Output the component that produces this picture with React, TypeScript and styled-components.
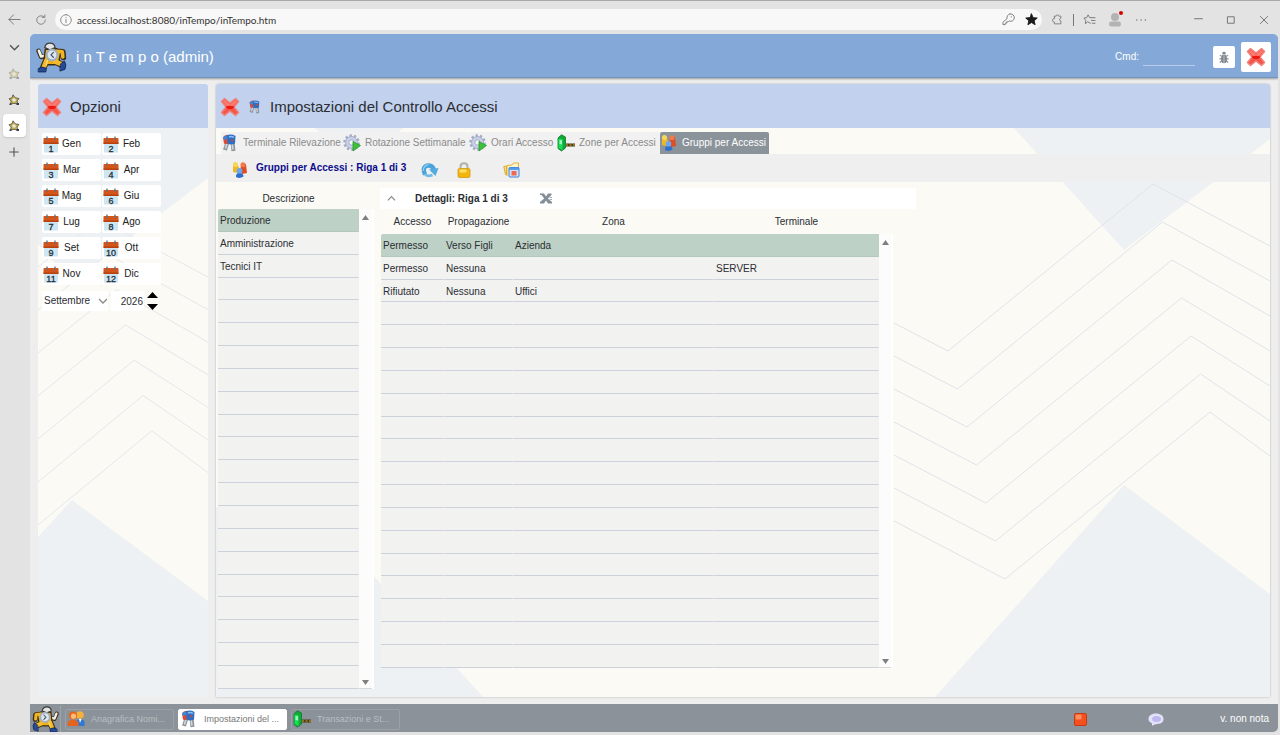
import React, { useState } from "react";
import styled, { createGlobalStyle, css } from "styled-components";

const GlobalStyle = createGlobalStyle`
  *, *::before, *::after { box-sizing: border-box; }
  body {
    margin: 0;
    background: #e3e3e3;
    color: #2b2e33;
    font-family: "Liberation Sans", Arial, sans-serif;
    font-size: 10px;
    line-height: 12px;
  }
  button, input, select { font: inherit; color: inherit; margin: 0; padding: 0; border: 0; background: none; border-radius: 0; }
  svg { display: block; flex: none; }
`;

/* ---------- layout ---------- */

const Browser = styled.div`
  display: flex;
  flex-direction: column;
  min-height: 100vh;
  background: #e3e3e3;
  border-top: 1px solid #a9a9ab;
  padding-bottom: 3px;
`;

const BrowserBar = styled.header`
  display: flex;
  align-items: center;
  height: 33px;
  padding: 4px 3px 0 6px;
  color: #77777a;
`;

const BarButton = styled.button<{ $w?: number; $dark?: boolean }>`
  display: flex;
  align-items: center;
  justify-content: center;
  flex: none;
  width: ${(p) => p.$w ?? 26}px;
  height: 21px;
  color: ${(p) => (p.$dark ? "#1c1c1c" : "inherit")};
`;

const AddressBox = styled.div`
  display: flex;
  align-items: center;
  flex: 1;
  height: 21px;
  gap: 5px;
  margin: 0 1px 0 -3px;
  padding: 0 3px 0 5px;
  border-radius: 11px;
  background: #f8f8f8;
`;

const Address = styled.input`
  flex: 1;
  min-width: 0;
  font-family: Lato, "Noto Sans", sans-serif;
  font-size: 10px;
  line-height: 14px;
  color: #333;
`;

const BarRule = styled.span`
  width: 1px;
  height: 12px;
  margin: 0 2px;
  background: #77777a;
`;

const Avatar = styled.span`
  position: relative;
  display: block;
`;

const AvatarDot = styled.span`
  position: absolute;
  top: -1px;
  right: -1px;
  width: 4px;
  height: 4px;
  border-radius: 50%;
  background: #d40000;
`;

const WindowButtons = styled.div`
  display: flex;
  margin-left: 31px;
  gap: 7px;
`;

const Below = styled.div`
  display: flex;
  flex: 1;
`;

const Rail = styled.nav`
  display: flex;
  flex-direction: column;
  align-items: center;
  width: 30px;
  padding: 2px 2px 0 0;
  gap: 3px;
  color: #555;
`;

const RailTab = styled.button<{ $active?: boolean; $faded?: boolean }>`
  display: flex;
  align-items: center;
  justify-content: center;
  width: 23px;
  height: 23px;
  border-radius: 4px;
  background: ${(p) => (p.$active ? "#fff" : "transparent")};
  box-shadow: ${(p) => (p.$active ? "0 1px 2px #c4c4c4" : "none")};
  svg { opacity: ${(p) => (p.$faded ? 0.4 : 1)}; }
`;

const AppWindow = styled.div`
  display: flex;
  flex-direction: column;
  flex: 1;
  min-width: 0;
  margin-right: 2px;
  border-radius: 5px 5px 5px 0;
  background: #eee;
  overflow: hidden;
`;

const AppBar = styled.header`
  display: flex;
  align-items: center;
  height: 44px;
  padding: 3px 7px 0 6px;
  background: #84a9d8;
  border-bottom: 1px solid #7594bd;
  box-shadow: 0 1px 2px #9a9a9a;
  color: #fff;
`;

const AppTitle = styled.h1`
  flex: 1;
  margin: 0 0 0 9px;
  font-size: 15px;
  line-height: 20px;
  font-weight: 400;
`;

const CommandLabel = styled.label`
  display: flex;
  align-items: center;
  gap: 4px;
  margin-right: 12px;
`;

const CommandInput = styled.input`
  width: 52px;
  height: 17px;
  border-bottom: 1px solid #b5cbe8;
`;

const AppBarButton = styled.button<{ $size: number }>`
  display: flex;
  align-items: center;
  justify-content: center;
  width: ${(p) => p.$size}px;
  height: ${(p) => p.$size}px;
  margin-left: 6px;
  border-radius: 2px;
  background: #fff;
`;

const Workspace = styled.main`
  display: flex;
  flex: 1;
  gap: 8px;
  padding: 6px 8px 7px;
`;

const Panel = styled.section<{ $width?: number; $raised?: boolean }>`
  display: flex;
  flex-direction: column;
  ${(p) => (p.$width ? css`flex: none; width: ${p.$width}px;` : css`flex: 1; min-width: 0;`)}
  border-radius: 3px 3px 0 0;
  box-shadow: ${(p) => (p.$raised ? "0 0 2px #a8a8a8" : "none")};
`;

const PanelHead = styled.header`
  display: flex;
  align-items: center;
  height: 44px;
  padding: 2px 4px 0;
  gap: 8px;
  background: #c1d1ee;
  border-radius: 3px 3px 0 0;
`;

const PanelTitle = styled.h2`
  margin: 0;
  font-size: 15px;
  line-height: 20px;
  font-weight: 400;
`;

const IconButton = styled.button`
  display: flex;
`;

const PanelBody = styled.div`
  position: relative;
  flex: 1;
  background: #fbfaf5;
`;

const Backdrop = styled.svg`
  position: absolute;
  inset: 0;
  width: 100%;
  height: 100%;
`;

const Content = styled.div`
  position: relative;
`;

/* ---------- options ---------- */

const Options = styled(Content)`
  padding: 5px 4px;
`;

const MonthGrid = styled.div`
  display: grid;
  grid-template-columns: 59px 59px;
  gap: 4px 1px;
`;

const MonthButton = styled.button`
  display: flex;
  align-items: center;
  height: 22px;
  padding-left: 1px;
  border-radius: 2px;
  background: #fff;
  color: #222;
`;

const MonthName = styled.span`
  flex: 1;
  padding-right: 17px;
  text-align: center;
`;

const PeriodRow = styled.div`
  display: flex;
  align-items: center;
  gap: 3px;
  margin-top: 6px;
`;

const MonthSelect = styled.span`
  display: flex;
  align-items: center;
  width: 66px;
  height: 20px;
  background: #fff;
`;

const Select = styled.select`
  appearance: none;
  flex: 1;
  width: 100%;
  height: 20px;
  padding-left: 2px;
  margin-right: -14px;
`;

const YearInput = styled.input`
  width: 33px;
  height: 20px;
  padding-right: 1px;
  text-align: right;
  background: #fff;
`;

const Spinner = styled.span`
  display: flex;
  flex-direction: column;
  gap: 6px;
`;

/* ---------- settings ---------- */

const Tabs = styled.div`
  display: flex;
  padding: 4px 0 0 5px;
`;

const Tab = styled.button<{ $width: number; $active?: boolean }>`
  display: flex;
  align-items: center;
  width: ${(p) => p.$width}px;
  height: 22px;
  gap: 4px;
  text-align: left;
  white-space: nowrap;
  border-radius: 2px 2px 0 0;
  background: ${(p) => (p.$active ? "#8b939a" : "#f1f1f1")};
  color: ${(p) => (p.$active ? "#fff" : "#8b8b8b")};
`;

const Toolbar = styled.div`
  display: flex;
  align-items: center;
  height: 28px;
  padding: 4px 0 0 15px;
  background: #efefef;
`;

const ToolbarTitle = styled.h3`
  width: 172px;
  margin: 0;
  padding: 0 0 5px 7px;
  font-size: 10px;
  line-height: 12px;
  color: #0c0c8c;
  white-space: nowrap;
`;

const ToolButton = styled.button<{ $gap?: number }>`
  display: flex;
  margin-right: ${(p) => p.$gap ?? 0}px;
`;

const Lists = styled.div`
  display: flex;
  align-items: flex-start;
  padding: 6px 2px 8px;
`;

const Grid = styled.div<{ $head: number }>`
  display: flex;
  width: max-content;
  padding-right: 2px;
  background: linear-gradient(#fff, #fff) right bottom / 16px calc(100% - ${(p) => p.$head}px) no-repeat;
`;

const Table = styled.table<{ $width: number; $height: number; $head: number }>`
  width: ${(p) => p.$width}px;
  height: ${(p) => p.$height}px;
  table-layout: fixed;
  border-collapse: separate;
  border-spacing: 0;
  th { height: ${(p) => p.$head}px; padding: 0; font-weight: 400; text-align: center; }
`;

const Row = styled.tr<{ $selected?: boolean }>`
  td {
    padding: 2px 0 0 2px;
    line-height: 12px;
    background: ${(p) => (p.$selected ? "#bed1c6" : "#f2f2f1")};
    border-right: 1px solid ${(p) => (p.$selected ? "#bed1c6" : "#f2f2f1")};
    border-bottom: 1px solid ${(p) => (p.$selected ? "#b3c8bb" : "#cdd1dc")};
  }
  td:first-child { border-top-left-radius: 2px; }
`;

const ScrollTrack = styled.div<{ $top: number; $width: number }>`
  display: flex;
  flex-direction: column;
  align-items: center;
  justify-content: space-between;
  width: ${(p) => p.$width}px;
  margin-top: ${(p) => p.$top}px;
  padding: 6px 0 3px;
  background: #fcfcfc;
  border-bottom: 1px solid #d8d8d8;
`;

const Details = styled.div`
  margin-left: 6px;
`;

const DetailsBar = styled.div`
  display: flex;
  align-items: center;
  width: 536px;
  height: 21px;
  padding-left: 7px;
  background: #fff;
`;

const DetailsTitle = styled.h3`
  width: 125px;
  margin: 0 0 0 19px;
  font-size: 10px;
  line-height: 12px;
`;

const DetailsTable = styled.div`
  padding-left: 1px;
`;

/* ---------- task bar ---------- */

const TaskBar = styled.footer`
  display: flex;
  align-items: center;
  height: 28px;
  padding: 2px 9px 0 2px;
  background: #8b9299;
  color: #fff;
`;

const TaskRule = styled.span`
  width: 1px;
  height: 26px;
  margin: 0 4px 0 1px;
  background: #9ea4aa;
`;

const TaskButton = styled.button<{ $active?: boolean }>`
  display: flex;
  align-items: center;
  width: 109px;
  height: 21px;
  gap: 6px;
  margin-right: 4px;
  padding-left: 1px;
  border: 1px solid ${(p) => (p.$active ? "#fff" : "#9ba1a7")};
  border-radius: 2px;
  background: ${(p) => (p.$active ? "#fff" : "transparent")};
  color: ${(p) => (p.$active ? "#777" : "#b9bec2")};
  font-size: 9px;
  white-space: nowrap;
`;

const Tray = styled.div`
  display: flex;
  align-items: center;
  margin-left: auto;
`;

const TrayButton = styled.button<{ $gap: number }>`
  display: flex;
  margin-right: ${(p) => p.$gap}px;
`;

/* ---------- icons ---------- */

const Mascot = ({ size, flip }: { size: number; flip?: boolean }) => (
  <svg width={size} height={size} viewBox="0 0 30 30" aria-hidden="true">
    <g transform={flip ? "translate(30 0) scale(-1 1)" : undefined} strokeLinejoin="round" strokeLinecap="round">
      <path d="M10 13 L5 14.500 L2.500 8.500" stroke="#3a2f16" strokeWidth="4.400" fill="none" />
      <path d="M10 13 L5 14 L2.800 8.500" stroke="#f1f1ee" strokeWidth="2.600" fill="none" />
      <path d="M10 18 L7 25 M19 19 L25 22" stroke="#3a2f16" strokeWidth="6.400" fill="none" />
      <path d="M20 9 L26 9.500 L26.500 15" stroke="#3a2f16" strokeWidth="5.400" fill="none" />
      <path d="M9 7 L20 6.500 L24 10 L22.500 17 L23 21 L17 22 L10 22 L8 16 Z" fill="#efae1f" stroke="#3a2f16" strokeWidth="1.400" />
      <path d="M20 9 L25.500 9.500 L26 14.500" stroke="#f2b526" strokeWidth="3.400" fill="none" />
      <path d="M10 18 L7.500 24.500 M18.500 19 L24.500 21.500" stroke="#f4bb2c" strokeWidth="4.400" fill="none" />
      <path d="M11 18 L10 22" stroke="#fbdc6a" strokeWidth="1.400" />
      <path d="M8.500 5.500 Q9 1 13.500 1 Q18 1 18.500 5.500 L13.500 7.500 Z" fill="#e3e5e5" stroke="#3a3a36" strokeWidth="1.200" />
      <path d="M2.500 25.500 Q6 23 10 25.500 L9.500 29 L2.500 29 Z" fill="#244a9b" stroke="#15254d" strokeWidth="0.800" />
      <path d="M24 21 L27.500 18.500 Q30 22 28 26.500 L23.500 28 Z" fill="#244a9b" stroke="#15254d" strokeWidth="0.800" />
      <circle cx="15.500" cy="12.500" r="5.200" fill="#dde7f1" stroke="#a3afbb" strokeWidth="2" />
      <path d="M16.800 10 L14.500 12.500 L16.800 14.800" fill="none" stroke="#4b5865" strokeWidth="1.200" />
    </g>
  </svg>
);

const StarMascot = () => (
  <svg width="12" height="12" viewBox="0 0 12 12" aria-hidden="true">
    <path d="M5 0.800 L7.200 3.800 L11 4.500 L9 7 L9.800 10 L6 9.300 L2.500 10 L3.200 7 L1 4.800 L4 3.800 Z" fill="#c9b04a" stroke="#4b4a40" strokeWidth="0.800" />
    <circle cx="6" cy="6" r="1.800" fill="#e6e8e6" />
    <path d="M1.500 9.500 H3.500 V11 H1.500 Z M8.500 9 H11 V11 H8.500 Z" fill="#2f3a55" />
  </svg>
);

const RedCross = ({ size = 20 }: { size?: number }) => (
  <svg width={size} height={size} viewBox="0 0 20 20" aria-hidden="true">
    <path
      d="M4.500 1.500 L10 6 L15.500 1.500 L18.500 4.500 L14 10 L18.500 15.500 L15.500 18.500 L10 14 L4.500 18.500 L1.500 15.500 L6 10 L1.500 4.500 Z"
      fill="#f5564b" stroke="#f0827a" strokeWidth="1.500" strokeLinejoin="round"
    />
    <path d="M4.500 3 L10 7.500 L15.500 3 L17 4.500 L13 9 L7 9 L3 4.500 Z" fill="#ff8b80" opacity="0.7" />
    <path d="M5.500 9.500 Q10 8 14.500 9.500 L13 11.500 Q10 12.500 7 11.500 Z" fill="#ea1a12" />
  </svg>
);

const Keys = ({ size = 18 }: { size?: number }) => (
  <svg width={size} height={size} viewBox="0 0 18 18" aria-hidden="true">
    <path d="M6.500 8 L4 16 M11.500 8 L12.500 17" stroke="#8d949b" strokeWidth="4" />
    <path d="M6 9 L4.500 14.500 M11 9 L12 15.500" stroke="#d3d8dc" strokeWidth="1.600" />
    <path d="M2 3.500 Q4 0 8 1 L9 8.500 Q6 11 3 9.500 Z" fill="#dd4a30" />
    <path d="M6 1.500 Q10 -0.500 14.500 2 L14 9.500 Q10 11.500 6.500 9.500 Z" fill="#2c6fc4" />
    <path d="M8 3 Q10.500 1.800 13 3.500" stroke="#8ec0f2" strokeWidth="1.400" fill="none" />
    <path d="M10 5 Q12 4.500 12.500 6.500 L11 8 Z" fill="#d2452f" />
    <path d="M2 3 L5.500 1.200 L7 4.500 L3 6 Z" fill="#3f86d8" />
  </svg>
);

const GearPlay = () => (
  <svg width="18" height="18" viewBox="0 0 18 18" aria-hidden="true">
    <circle cx="8.500" cy="8.500" r="7" fill="none" stroke="#a3adc9" strokeWidth="2.600" strokeDasharray="2.400 1.998" />
    <circle cx="8.500" cy="8.500" r="6" fill="#c9d0e6" stroke="#98a3c2" strokeWidth="0.800" />
    <circle cx="8.500" cy="8.500" r="2.600" fill="#f6f7fb" stroke="#98a3c2" strokeWidth="0.800" />
    <path d="M10 7.500 L17.500 11.500 L10 17 Z" fill="#3ec23a" stroke="#27972a" strokeWidth="0.800" />
  </svg>
);

const Door = () => (
  <svg width="18" height="18" viewBox="0 0 18 18" aria-hidden="true">
    <path d="M1 4 L4.500 0.800 L8.500 3 L8.500 14 L4.500 17 L1 14.500 Z" fill="#12a839" stroke="#0a7a28" strokeWidth="0.800" />
    <path d="M1.500 4.500 L5.500 5 L5.500 16 L1.500 14 Z" fill="#18dd55" />
    <path d="M2.500 6 L5 6.300 L5 10.500 L2.500 10 Z" fill="#9df5bf" />
    <path d="M9 11 H18" stroke="#4a3a14" strokeWidth="3" />
    <path d="M9 11 H18" stroke="#d9a833" strokeWidth="1.200" strokeDasharray="2 1.500" />
  </svg>
);

const People = () => (
  <svg width="18" height="18" viewBox="0 0 18 18" aria-hidden="true">
    <path d="M2 11 V5 Q1.500 2 4 1.500 Q6.500 2 7 4.500 L8.500 8 L6.500 12 Z" fill="#efb727" />
    <circle cx="4.500" cy="3.600" r="2.500" fill="#f9d659" />
    <path d="M9.500 8 L10 3.500 Q13 0.500 15 3.500 L16 12 L11 13 Z" fill="#df4d27" />
    <circle cx="12" cy="3.800" r="2.500" fill="#f47a4c" />
    <path d="M5 16 Q4.500 12.500 8 11.500 Q12.500 12 12.500 15.500 Q9 18 5 16 Z" fill="#2e6fce" />
    <circle cx="8.500" cy="9.800" r="2.800" fill="#6aa7f0" />
  </svg>
);

const Couple = () => (
  <svg width="18" height="18" viewBox="0 0 18 18" aria-hidden="true">
    <circle cx="13" cy="5" r="3.800" fill="#f5b13a" />
    <path d="M9 16 V11 Q13 7 17.500 11 V16 Z" fill="#2f79d6" />
    <path d="M12 9 L13 13 L14.500 9 Z" fill="#fff" />
    <circle cx="6" cy="5.500" r="4" fill="#e8641b" />
    <circle cx="6.500" cy="6.200" r="2.600" fill="#f9bd7a" />
    <path d="M0.500 16 V12 Q6 7.500 11.500 12 V16 Z" fill="#e2641e" />
  </svg>
);

const Refresh = () => (
  <svg width="18" height="16" viewBox="0 0 18 16" aria-hidden="true">
    <path d="M4 12.500 Q0.500 4.500 7 3.500 Q11.500 3 13 8" fill="none" stroke="#4aa3da" strokeWidth="4.400" />
    <path d="M2 9 Q2.500 3.500 7.500 2.500" fill="none" stroke="#9bd4f3" strokeWidth="1.200" />
    <path d="M8 7.500 L17.500 6 L14.500 14 Z" fill="#52acdf" />
    <path d="M4 12.500 Q7 15 11.500 13" fill="none" stroke="#74bbe6" strokeWidth="2.600" />
  </svg>
);

const Padlock = () => (
  <svg width="14" height="16" viewBox="0 0 14 16" aria-hidden="true">
    <path d="M3.500 7.500 V4.500 Q3.500 1.200 7 1.200 Q10.500 1.200 10.500 4.500 V7.500" fill="none" stroke="#b3b1a6" strokeWidth="2" />
    <rect x="1" y="6.500" width="12" height="9" rx="1.500" fill="#f3b60f" stroke="#d19a10" strokeWidth="0.800" />
    <rect x="2.500" y="7.500" width="7" height="3" rx="1" fill="#ffe06a" />
  </svg>
);

const Folders = () => (
  <svg width="17" height="16" viewBox="0 0 17 16" aria-hidden="true">
    <path d="M0.800 4.500 L3.500 4 V13 L2.500 12.500 Z" fill="#fbe08a" stroke="#dca928" />
    <path d="M4 14 V3.500 L9 3 L10.500 1 H15.500 V8" fill="#fdf3cc" stroke="#e2b23c" />
    <rect x="6" y="5.500" width="10" height="9.500" rx="1" fill="#cfe3fb" stroke="#3a82d8" />
    <rect x="6" y="5.500" width="10" height="2.400" fill="#4f97ea" />
    <rect x="8.500" y="9" width="5" height="4.500" fill="#f0694d" />
  </svg>
);

const ExcelMark = () => (
  <svg width="12" height="11" viewBox="0 0 12 11" aria-hidden="true">
    <path d="M0 0.500 H4 L6 3.500 L8 0.500 H11.500 V2 L7.800 5.500 L12 9 V10.500 H8 L6 7.500 L4 10.500 H0 V9 L4.200 5.500 L1.500 2 H0 Z" fill="#848e98" />
    <path d="M9.500 4.500 H12 M9.500 6.500 H12" stroke="#a6aeb6" />
  </svg>
);

const Bug = () => (
  <svg width="10" height="13" viewBox="0 0 12 13" preserveAspectRatio="none" aria-hidden="true">
    <path d="M3.800 3.200 Q3.800 0.800 6 0.800 Q8.200 0.800 8.200 3.200 Z" fill="#7d858c" />
    <path d="M1 4.500 L3 5 M11 4.500 L9 5 M0.500 7.800 H3 M11.500 7.800 H9 M1 11.500 L3 10 M11 11.500 L9 10" stroke="#7d858c" strokeWidth="1.200" />
    <rect x="2.600" y="3.800" width="6.800" height="8.400" rx="3" fill="#7d858c" />
    <path d="M6 4.500 V12" stroke="#d9dcdf" strokeWidth="0.800" />
  </svg>
);

const Calendar = ({ day }: { day: number }) => (
  <svg width="16" height="17" viewBox="0 0 16 17" aria-hidden="true">
    <rect x="1" y="3" width="14" height="13.500" fill="#cde6f2" />
    <rect x="0.500" y="2" width="15" height="6" rx="0.800" fill="#d2561b" />
    <rect x="0.500" y="6.500" width="15" height="1.500" fill="#b5430f" />
    <path d="M4 0.500 V4 M12 0.500 V4" stroke="#6b7076" strokeWidth="1.400" />
    <text x="8" y="16" textAnchor="middle" fontFamily="Liberation Sans" fontSize="9" fill="#22303c" stroke="#22303c" strokeWidth="0.300">{day}</text>
  </svg>
);

const Triangle = ({ down, big }: { down?: boolean; big?: boolean }) => (
  <svg width={big ? 11 : 7} height={big ? 6 : 5} viewBox="0 0 10 6" preserveAspectRatio="none" aria-hidden="true">
    <path d={down ? "M0 0 H10 L5 6 Z" : "M0 6 H10 L5 0 Z"} fill={big ? "#000" : "#7f7f7f"} />
  </svg>
);

const Chevron = ({ up, size = 9, color = "currentColor" }: { up?: boolean; size?: number; color?: string }) => (
  <svg width={size} height={size} viewBox="0 0 10 10" aria-hidden="true">
    <path d={up ? "M1 7 L5 3 L9 7" : "M1 3 L5 7 L9 3"} fill="none" stroke={color} strokeWidth="1.300" />
  </svg>
);

const Line = ({ d, size = 13, fill = "none", width = 1 }: { d: string; size?: number; fill?: string; width?: number }) => (
  <svg width={size} height={size} viewBox="0 0 14 14" aria-hidden="true">
    <path d={d} fill={fill} stroke="currentColor" strokeWidth={width} strokeLinejoin="round" strokeLinecap="round" />
  </svg>
);

const STAR = "M7 1 L8.800 5 L13.200 5.400 L9.900 8.300 L10.900 12.600 L7 10.300 L3.100 12.600 L4.100 8.300 L0.800 5.400 L5.200 5 Z";

/* ---------- data ---------- */

const months = ["Gen", "Feb", "Mar", "Apr", "Mag", "Giu", "Lug", "Ago", "Set", "Ott", "Nov", "Dic"];
const monthNames = [
  "Gennaio", "Febbraio", "Marzo", "Aprile", "Maggio", "Giugno",
  "Luglio", "Agosto", "Settembre", "Ottobre", "Novembre", "Dicembre",
];

const tabs = [
  { label: "Terminale Rilevazione", width: 122, icon: <Keys /> },
  { label: "Rotazione Settimanale", width: 126, icon: <GearPlay /> },
  { label: "Orari Accesso", width: 88, icon: <GearPlay /> },
  { label: "Zone per Accessi", width: 103, icon: <Door /> },
  { label: "Gruppi per Accessi", width: 109, icon: <People />, active: true },
];

const tasks = [
  { label: "Anagrafica Nomi...", icon: <Couple /> },
  { label: "Impostazioni del ...", icon: <Keys />, active: true },
  { label: "Transazioni e St...", icon: <Door /> },
];

const groups = ["Produzione", "Amministrazione", "Tecnici IT"];
const rules = [
  ["Permesso", "Verso Figli", "Azienda", ""],
  ["Permesso", "Nessuna", "", "SERVER"],
  ["Rifiutato", "Nessuna", "Uffici", ""],
];

const BLANK = "\u00a0";

const fillRows = <T,>(rows: T[], count: number, empty: T) =>
  Array.from({ length: count }, (_, i) => rows[i] ?? empty);

const mainWaves = Array.from({ length: 7 }, (_, i) => {
  const x = i * 9.5;
  const y = i * 38;
  return `M678 ${195 + i * 33} L${732 + x} ${223 + y} L${937 + x} ${56 + y} L1054 ${118 + i * 35}`;
});

const sideWaves = Array.from({ length: 7 }, (_, i) =>
  `M0 ${139 + i * 43} L${61 + i * 8.8} ${91 + i * 35.3} L170 ${149 + i * 32.6}`,
);

const Scroll = ({ top, width }: { top: number; width: number }) => (
  <ScrollTrack $top={top} $width={width}>
    <IconButton aria-label="Scorri su"><Triangle /></IconButton>
    <IconButton aria-label="Scorri giù"><Triangle down /></IconButton>
  </ScrollTrack>
);

const OptionsPanel = () => {
  const [month, setMonth] = useState("Settembre");
  const [year, setYear] = useState(2026);
  return (
    <Panel $width={170}>
      <PanelHead>
        <IconButton aria-label="Chiudi opzioni"><RedCross /></IconButton>
        <PanelTitle>Opzioni</PanelTitle>
      </PanelHead>
      <PanelBody>
        <Backdrop viewBox="0 0 170 569" preserveAspectRatio="xMinYMin slice" aria-hidden="true">
          <path d="M0 0 H170 V50 L34 154 L0 116 Z M34 372 L170 473 V569 H0 V409 Z" fill="#edf1f4" />
          {sideWaves.map((d) => <path key={d} d={d} fill="none" stroke="#e4e7ec" />)}
        </Backdrop>
        <Options>
          <MonthGrid>
            {months.map((name, i) => (
              <MonthButton key={name}>
                <Calendar day={i + 1} />
                <MonthName>{name}</MonthName>
              </MonthButton>
            ))}
          </MonthGrid>
          <PeriodRow>
            <MonthSelect>
              <Select aria-label="Mese" value={month} onChange={(e) => setMonth(e.target.value)}>
                {monthNames.map((name) => <option key={name}>{name}</option>)}
              </Select>
              <Chevron size={10} color="#8a8a8a" />
            </MonthSelect>
            <YearInput aria-label="Anno" value={year} onChange={(e) => setYear(Number(e.target.value) || 0)} />
            <Spinner>
              <IconButton aria-label="Anno successivo" onClick={() => setYear(year + 1)}><Triangle big /></IconButton>
              <IconButton aria-label="Anno precedente" onClick={() => setYear(year - 1)}><Triangle big down /></IconButton>
            </Spinner>
          </PeriodRow>
        </Options>
      </PanelBody>
    </Panel>
  );
};

const SettingsPanel = () => (
  <Panel $raised>
    <PanelHead>
      <IconButton aria-label="Chiudi impostazioni"><RedCross /></IconButton>
      <Keys size={14} />
      <PanelTitle>Impostazioni del Controllo Accessi</PanelTitle>
    </PanelHead>
    <PanelBody>
      <Backdrop viewBox="0 0 1054 569" preserveAspectRatio="xMaxYMin slice" aria-hidden="true">
        <path
          d="M99 0 H187 L143 40 Z M798 0 L908 122 L1054 11 V0 Z M908 357 L1054 466 V569 H719 Z M60 340 L267 569 H0 V380 Z"
          fill="#edf1f4"
        />
        {mainWaves.map((d) => <path key={d} d={d} fill="none" stroke="#dfe3ea" />)}
      </Backdrop>
      <Content>
        <Tabs role="tablist">
          {tabs.map((tab) => (
            <Tab key={tab.label} role="tab" aria-selected={!!tab.active} $width={tab.width} $active={tab.active}>
              {tab.icon}
              {tab.label}
            </Tab>
          ))}
        </Tabs>
        <Toolbar>
          <People />
          <ToolbarTitle>Gruppi per Accessi : Riga 1 di 3</ToolbarTitle>
          <ToolButton $gap={18} aria-label="Aggiorna"><Refresh /></ToolButton>
          <ToolButton $gap={32} aria-label="Blocca"><Padlock /></ToolButton>
          <ToolButton aria-label="Cartelle"><Folders /></ToolButton>
        </Toolbar>
        <Lists>
          <Grid $head={21}>
            <Table $width={141} $height={501} $head={21}>
              <thead><tr><th scope="col">Descrizione</th></tr></thead>
              <tbody>
                {fillRows(groups, 21, BLANK).map((name, i) => (
                  <Row key={i} $selected={i === 0}><td>{name}</td></Row>
                ))}
              </tbody>
            </Table>
            <Scroll top={21} width={13} />
          </Grid>
          <Details>
            <DetailsBar>
              <IconButton aria-label="Comprimi"><Chevron up color="#888" /></IconButton>
              <DetailsTitle>Dettagli: Riga 1 di 3</DetailsTitle>
              <IconButton aria-label="Esporta in Excel"><ExcelMark /></IconButton>
            </DetailsBar>
            <DetailsTable>
              <Grid $head={25}>
                <Table $width={498} $height={459} $head={25}>
                  <colgroup>
                    <col width="63" />
                    <col width="69" />
                    <col width="201" />
                    <col width="165" />
                  </colgroup>
                  <thead>
                    <tr>
                      {["Accesso", "Propagazione", "Zona", "Terminale"].map((name) => <th key={name} scope="col">{name}</th>)}
                    </tr>
                  </thead>
                  <tbody>
                    {fillRows(rules, 19, ["", "", "", ""]).map((cells, i) => (
                      <Row key={i} $selected={i === 0}>
                        {cells.map((cell, c) => <td key={c}>{cell || BLANK}</td>)}
                      </Row>
                    ))}
                  </tbody>
                </Table>
                <Scroll top={25} width={12} />
              </Grid>
            </DetailsTable>
          </Details>
        </Lists>
      </Content>
    </PanelBody>
  </Panel>
);

export default function App() {
  return (
    <Browser>
      <GlobalStyle />
      <BrowserBar>
        <BarButton $w={17} aria-label="Indietro"><Line d="M13 7 H1 M6 2 L1 7 L6 12" /></BarButton>
        <BarButton $w={35} aria-label="Ricarica"><Line d="M12 7 A5 5 0 1 1 10 3 M11.500 1 V4 H8.500" size={12} /></BarButton>
        <AddressBox>
          <Line d="M7 0.800 A6.200 6.200 0 1 1 6.900 0.800 M7 6.300 V10 M7 4 V4.200" size={12} />
          <Address aria-label="Indirizzo" defaultValue="accessi.localhost:8080/inTempo/inTempo.htm" />
          <BarButton $w={20} aria-label="Password">
            <Line d="M8.500 1 A4 4 0 1 1 7.500 8.500 L6.500 9.500 H5 V11 H3.500 V12.500 H1 V10 L5.500 6 A4 4 0 0 1 8.500 1 M10 4 V4.200" />
          </BarButton>
          <BarButton $w={16} $dark aria-label="Preferiti"><Line d={STAR} fill="currentColor" /></BarButton>
        </AddressBox>
        <BarButton $w={28} aria-label="Estensioni">
          <Line d="M4 2.500 H6 A1.500 1.500 0 0 1 9 2.500 H11.500 V5 A1.500 1.500 0 1 0 11.500 8 V11.500 H4 V9.500 A2 2 0 0 1 4 5 Z" size={12} />
        </BarButton>
        <BarRule />
        <BarButton aria-label="Elenco preferiti">
          <Line d="M8 11 L5 9.500 L2.500 11.500 L3 8 L1 5.500 L4 5 L5.500 2 L7.200 5 H13 M9 8 H13 M10 11 H13" />
        </BarButton>
        <BarButton aria-label="Profilo">
          <Avatar>
            <svg width="14" height="15" viewBox="0 0 14 15" aria-hidden="true">
              <circle cx="7" cy="5" r="4" fill="#b3b3b3" />
              <rect x="1" y="9.500" width="12" height="5" rx="2.500" fill="#b3b3b3" />
            </svg>
            <AvatarDot />
          </Avatar>
        </BarButton>
        <BarButton aria-label="Altro"><Line d="M2 7 H2.200 M7 7 H7.200 M12 7 H12.200" width={1.5} size={12} /></BarButton>
        <WindowButtons>
          <BarButton aria-label="Riduci"><Line d="M2 6 H12" size={11} width={1.3} /></BarButton>
          <BarButton aria-label="Ingrandisci"><Line d="M2.500 2.500 H11.500 V11.500 H2.500 Z" size={10} width={1.4} /></BarButton>
          <BarButton aria-label="Chiudi finestra"><Line d="M2 2 L12 12 M12 2 L2 12" size={10} width={1.4} /></BarButton>
        </WindowButtons>
      </BrowserBar>
      <Below>
        <Rail>
          <RailTab aria-label="Schede"><Chevron size={11} /></RailTab>
          <RailTab $faded aria-label="Scheda 1"><StarMascot /></RailTab>
          <RailTab aria-label="Scheda 2"><StarMascot /></RailTab>
          <RailTab $active aria-label="Scheda 3"><StarMascot /></RailTab>
          <RailTab aria-label="Nuova scheda"><Line d="M7 2 V12 M2 7 H12" size={12} width={1.3} /></RailTab>
        </Rail>
        <AppWindow>
          <AppBar>
            <Mascot size={31} />
            <AppTitle>i n T e m p o (admin)</AppTitle>
            <CommandLabel>
              Cmd:
              <CommandInput type="text" />
            </CommandLabel>
            <AppBarButton $size={22} aria-label="Debug"><Bug /></AppBarButton>
            <AppBarButton $size={30} aria-label="Esci"><RedCross /></AppBarButton>
          </AppBar>
          <Workspace>
            <OptionsPanel />
            <SettingsPanel />
          </Workspace>
          <TaskBar>
            <IconButton aria-label="Menu"><Mascot size={27} flip /></IconButton>
            <TaskRule />
            {tasks.map((task) => (
              <TaskButton key={task.label} $active={task.active}>
                {task.icon}
                {task.label}
              </TaskButton>
            ))}
            <Tray>
              <TrayButton $gap={61} aria-label="Stato">
                <svg width="13" height="13" viewBox="0 0 13 13" aria-hidden="true">
                  <rect x="0.500" y="0.500" width="12" height="12" rx="1.500" fill="#f4511f" stroke="#c93a10" />
                  <rect x="1.500" y="1.500" width="6" height="5" rx="1" fill="#ff8c5c" />
                </svg>
              </TrayButton>
              <TrayButton $gap={56} aria-label="Messaggi">
                <svg width="16" height="13" viewBox="0 0 16 13" aria-hidden="true">
                  <path
                    d="M8 0.500 C12.500 0.500 15.500 2.800 15.500 6 C15.500 9.500 12 11.300 7.500 11.200 L4 12.800 L4 10.300 C1.800 9.500 0.500 8 0.500 6 C0.500 2.800 3.500 0.500 8 0.500 Z"
                    fill="#e4e2fb"
                  />
                  <ellipse cx="8.500" cy="6" rx="4.500" ry="3" fill="#bdb8f0" />
                </svg>
              </TrayButton>
              v. non nota
            </Tray>
          </TaskBar>
        </AppWindow>
      </Below>
    </Browser>
  );
}
